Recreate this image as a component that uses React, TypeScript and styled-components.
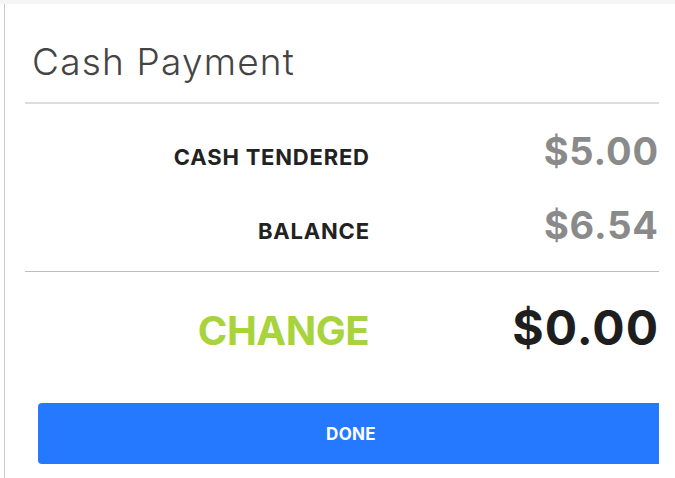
import React from 'react';
import styled, { createGlobalStyle } from 'styled-components';

const GlobalStyle = createGlobalStyle`
  html, body {
    margin: 0;
    padding: 0;
    background: #fff;
    font-family: Inter, "Open Sans", "Liberation Sans", sans-serif;
  }
`;

const TopStrip = styled.div`
  height: 4px;
  background: #f5f5f5;
`;

const Panel = styled.section`
  margin-left: 4px;
  height: 474px;
  border-left: 1px solid #c9ccd3;
  box-sizing: border-box;
`;

const Content = styled.div`
  margin-left: 20px;
  width: 634px;
  overflow: hidden;
`;

const Header = styled.header`
  height: 100px;
  box-sizing: border-box;
  padding: 16px 0 0 7px;
  display: flex;
  align-items: center;
  border-bottom: 2px solid #dddddd;
`;

const Title = styled.h2`
  margin: 0;
  font-size: 37px;
  font-weight: 300;
  color: #444;
  letter-spacing: 1.2px;
`;

const Summary = styled.div`
  display: grid;
  grid-template-columns: 344px 1fr;
  align-items: baseline;
  padding: 10px 0 9px;
  border-bottom: 1px solid #bdbdbd;
`;

interface BigProps {
  $big?: boolean;
}

const Label = styled.span<BigProps>`
  text-align: right;
  font-size: ${({ $big }) => ($big ? '40px' : '22px')};
  font-weight: 700;
  color: ${({ $big }) => ($big ? '#a8d33c' : '#222')};
  letter-spacing: ${({ $big }) => ($big ? '-0.5px' : '0.8px')};
  margin-right: ${({ $big }) => ($big ? '0' : '-0.8px')};
`;

const Amount = styled.span<BigProps>`
  text-align: right;
  font-size: ${({ $big }) => ($big ? '48px' : '38px')};
  font-weight: 700;
  color: ${({ $big }) => ($big ? '#1e1e1e' : '#8a8a8a')};
  line-height: ${({ $big }) => ($big ? '72px' : '74px')};
  letter-spacing: ${({ $big }) => ($big ? '1px' : '0.8px')};
  margin-right: ${({ $big }) => ($big ? '0' : '0.2px')};
`;

const ChangeRow = styled.div`
  display: grid;
  grid-template-columns: 344px 1fr;
  align-items: baseline;
  padding-top: 20px;
`;

const DoneButton = styled.button`
  display: block;
  margin: 39px 0 0 13px;
  width: 640px;
  height: 61px;
  border: 0;
  border-radius: 4px;
  background: #2479ff;
  color: #fff;
  font-family: Inter, "Open Sans", "Liberation Sans", sans-serif;
  font-size: 17px;
  font-weight: 700;
  letter-spacing: 0.3px;
  padding-right: 20px;
`;

const rows = [
  { label: 'CASH TENDERED', amount: '$5.00' },
  { label: 'BALANCE', amount: '$6.54' }
];

export default function App() {
  return (
    <>
      <GlobalStyle />
      <TopStrip />
      <Panel>
        <Content>
          <Header>
            <Title>Cash Payment</Title>
          </Header>
          <Summary>
            {rows.map(row => (
              <React.Fragment key={row.label}>
                <Label>{row.label}</Label>
                <Amount>{row.amount}</Amount>
              </React.Fragment>
            ))}
          </Summary>
          <ChangeRow>
            <Label $big>CHANGE</Label>
            <Amount $big>$0.00</Amount>
          </ChangeRow>
          <DoneButton>DONE</DoneButton>
        </Content>
      </Panel>
    </>
  );
}
